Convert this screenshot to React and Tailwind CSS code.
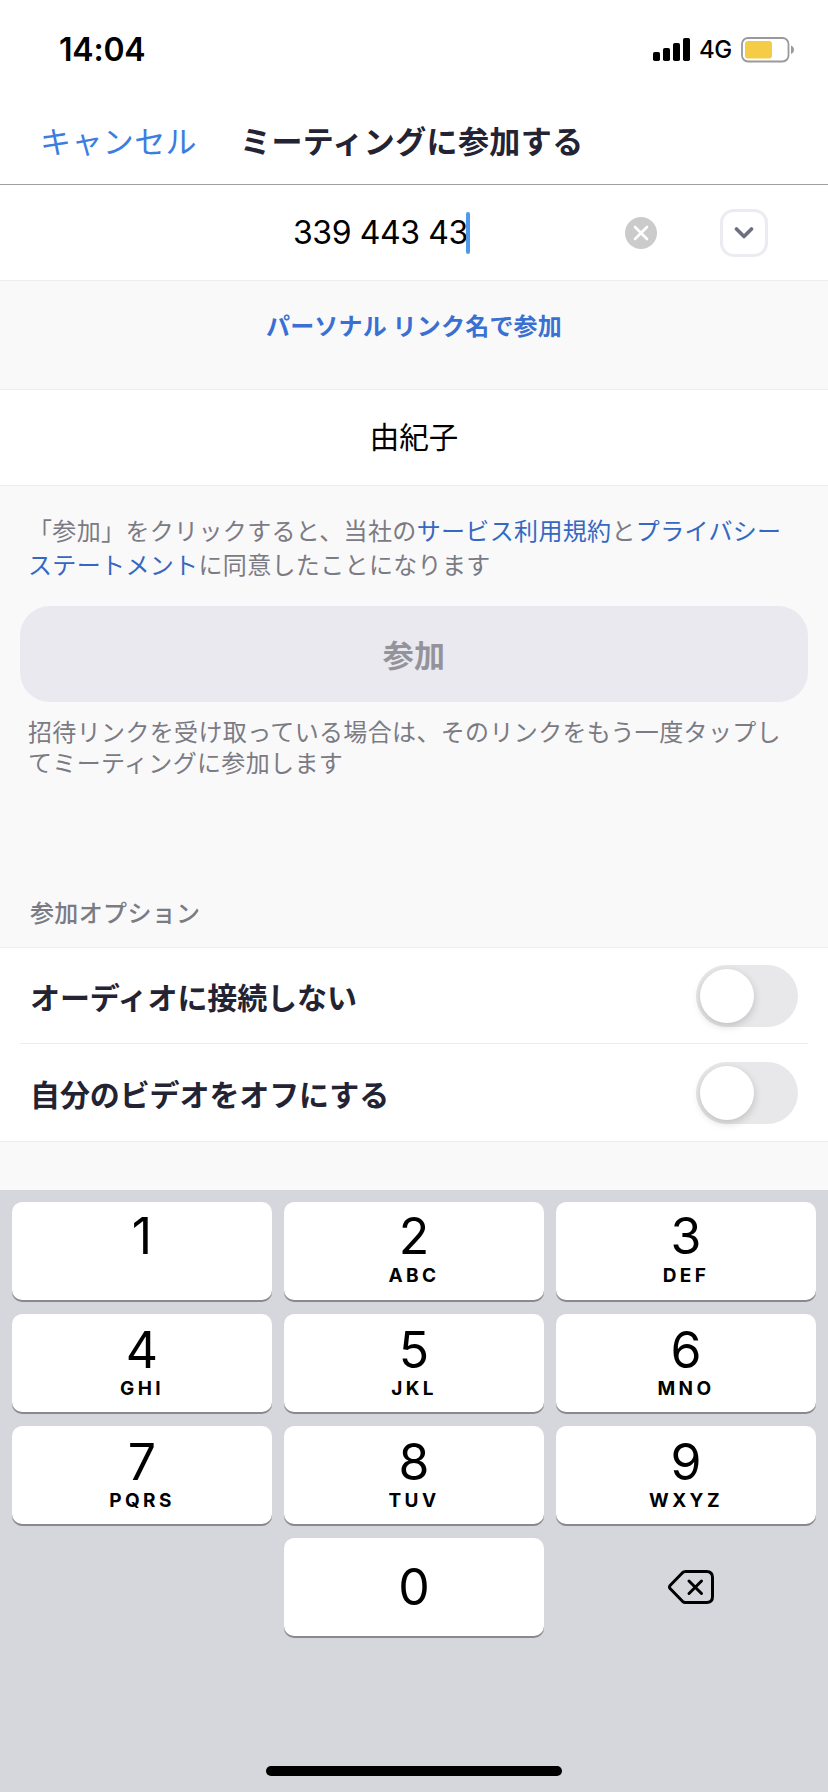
import React, { useState } from "react";

const keys = [
  { digit: "1", letters: "" },
  { digit: "2", letters: "ABC" },
  { digit: "3", letters: "DEF" },
  { digit: "4", letters: "GHI" },
  { digit: "5", letters: "JKL" },
  { digit: "6", letters: "MNO" },
  { digit: "7", letters: "PQRS" },
  { digit: "8", letters: "TUV" },
  { digit: "9", letters: "WXYZ" },
]

const options = [
  { id: "audio", label: "オーディオに接続しない" },
  { id: "video", label: "自分のビデオをオフにする" },
]

function StatusBar() {
  return (
    <div className="flex h-[98px] items-center pl-[59px] pr-[33px] text-black">
      <p className="mt-[2px] text-[32px] leading-none font-semibold tracking-[-0.2px]">14:04</p>
      <div className="ml-auto flex items-center">
        <svg className="mt-[1px]" width="37" height="24" viewBox="0 0 37 24">
          <rect x="0" y="14" width="7" height="9" rx="1.8" />
          <rect x="10" y="10" width="7" height="13" rx="1.8" />
          <rect x="20" y="5" width="7" height="18" rx="1.8" />
          <rect x="30" y="0" width="7" height="23" rx="1.8" />
        </svg>
        <span className="ml-[9px] mt-[2px] w-[42px] text-[24px] leading-none font-medium tracking-[-0.5px]">4G</span>
        <svg className="mt-[1px]" width="54" height="26" viewBox="0 0 54 26">
          <rect x="1" y="1" width="46.5" height="23.5" rx="6" fill="none" stroke="#9a9a9c" strokeWidth="1.8" />
          <rect x="4" y="4" width="27" height="17.5" rx="3" fill="#f5cc46" />
          <path d="M50 8.5c4 1.500 4 7 0 8.500z" fill="#9a9a9c" />
        </svg>
      </div>
    </div>
  )
}

function Toggle({ on, onClick }) {
  return (
    <button
      onClick={onClick}
      className={`flex h-[62px] w-[102px] items-center rounded-full bg-[#e8e8ea] p-[4px] ${on ? "justify-end" : "justify-start"}`}
    >
      <span className="size-[54px] rounded-full bg-white shadow-[0_3px_8px_rgba(0,0,0,0.18)]" />
    </button>
  )
}

function Key({ digit, letters, first }) {
  return (
    <button className={`flex h-[98px] flex-col items-center rounded-[10px] bg-white shadow-[0_2px_0_#8a8a8e] ${first ? "pt-[9px]" : "pt-[11px]"}`}>
      <span className="text-[50px] leading-[50px]">{digit}</span>
      <span className={`text-[19px] leading-[20px] font-bold tracking-[3.4px] ${first ? "mt-[5px]" : "mt-[4px]"}`}>{letters}</span>
    </button>
  )
}

export default function App() {
  const [enabled, setEnabled] = useState({})

  const toggleHandler = (id) => {
    setEnabled((prev) => ({ ...prev, [id]: !prev[id] }))
  }

  return (
    <div lang="ja" className="flex h-[1792px] w-[828px] flex-col overflow-hidden bg-[#f9f9fa] font-['Inter','Noto_Sans_CJK_JP',sans-serif]">
      <header className="h-[185px] border-b border-[#a0a0a2] bg-white">
        <StatusBar />
        <div className="flex h-[84px] items-center pl-[40px] font-['Noto_Sans_CJK_JP',sans-serif] text-[31px] tracking-[0.4px]">
          <button className="w-[200px] text-left text-[#3b7de0]">キャンセル</button>
          <h1 className="font-bold text-[#232333]">ミーティングに参加する</h1>
        </div>
      </header>

      <div className="flex h-[96px] items-center border-b border-[#ededef] bg-white pl-[293px] pr-[60px]">
        <span className="w-[173px] whitespace-nowrap text-[32px] leading-none tracking-[-0.4px] text-black">339 443 43</span>
        <span className="h-[42px] w-[4px] rounded-full bg-[#4f9ae8]" />
        <button className="ml-auto mr-[63px] flex size-[32px] items-center justify-center rounded-full bg-[#cbcbcc]">
          <svg width="16" height="16" viewBox="0 0 16 16" stroke="#fff" strokeWidth="2.6" strokeLinecap="round">
            <path d="M2 2L14 14M14 2L2 14" />
          </svg>
        </button>
        <button className="flex size-[48px] items-center justify-center rounded-[14px] border-[3px] border-[#ebebf2]">
          <svg width="20" height="14" viewBox="0 0 20 14" fill="none" stroke="#6e6e82" strokeWidth="3.6" strokeLinecap="round" strokeLinejoin="round">
            <path d="M2.500 3L10 10.500L17.500 3" />
          </svg>
        </button>
      </div>

      <div className="flex h-[109px] justify-center border-b border-[#ededef] pt-[26px]">
        <button className="h-[36px] font-['Noto_Sans_CJK_JP',sans-serif] text-[24px] leading-[36px] font-bold tracking-[0.2px] text-[#3a70d2]">パーソナル リンク名で参加</button>
      </div>

      <div className="flex h-[96px] items-center justify-center border-b border-[#ededef] bg-white text-[29.500px] text-black">
        由紀子
      </div>

      <div className="flex h-[462px] flex-col border-b border-[#ededef] font-['Noto_Sans_CJK_JP',sans-serif] text-[24px] tracking-[0.35px] text-[#7b7b84]">
        <p className="mt-[27px] ml-[28px] leading-[34px] whitespace-nowrap">
          「参加」をクリックすると、当社の<a className="text-[#3568c0]">サービス利用規約</a>と<a className="text-[#3568c0]">プライバシー<br />ステートメント</a>に同意したことになります
        </p>
        <button className="mx-[20px] mt-[25px] h-[96px] shrink-0 rounded-[30px] bg-[#e9e9ef] text-[31px] font-bold text-[#939399]">参加</button>
        <p className="mt-[13px] ml-[28px] leading-[31px] whitespace-nowrap">
          招待リンクを受け取っている場合は、そのリンクをもう一度タップし<br />てミーティングに参加します
        </p>
        <h2 className="mt-auto mb-[17px] ml-[30px] leading-[36px] font-medium">参加オプション</h2>
      </div>

      <ul className="border-b border-[#ededef] bg-white">
        {options.map((option, i) => (
          <li
            key={option.id}
            className={`mx-[20px] flex items-center justify-between pl-[10px] pr-[10px] ${i === 0 ? "h-[96px] border-b border-[#ededef]" : "h-[97px]"}`}
          >
            <p className="font-['Noto_Sans_CJK_JP',sans-serif] text-[30px] leading-[44px] font-bold tracking-[-0.1px] text-[#232333]">{option.label}</p>
            <Toggle on={!!enabled[option.id]} onClick={() => toggleHandler(option.id)} />
          </li>
        ))}
      </ul>

      <div className="mt-auto flex h-[602px] flex-col items-center bg-[#d6d7dc] pt-[12px]">
        <div className="grid w-[804px] grid-cols-3 gap-x-[12px] gap-y-[14px] text-black">
          {keys.map((k, i) => (
            <Key key={k.digit} digit={k.digit} letters={k.letters} first={i < 3} />
          ))}
          <span />
          <button className="flex h-[98px] items-center justify-center rounded-[10px] bg-white text-[50px] leading-none shadow-[0_2px_0_#8a8a8e]">0</button>
          <button className="flex h-[98px] items-center justify-center">
            <svg className="ml-[10px]" width="48" height="36" viewBox="0 0 48 36" fill="none" stroke="#000" strokeWidth="3" strokeLinecap="round" strokeLinejoin="round">
              <path d="M18.500 2.500H39.500Q45.500 2.500 45.500 8.500V27.500Q45.500 33.500 39.500 33.500H18.500Q16.800 33.500 15.500 32.300L3.300 19.800Q1.700 18 3.300 16.200L15.500 3.700Q16.800 2.500 18.500 2.500Z" />
              <path d="M22 12L34.500 24.500M34.500 12L22 24.500" />
            </svg>
          </button>
        </div>
        <div className="mt-auto mb-[16px] h-[10px] w-[296px] rounded-full bg-black" />
      </div>
    </div>
  )
}
